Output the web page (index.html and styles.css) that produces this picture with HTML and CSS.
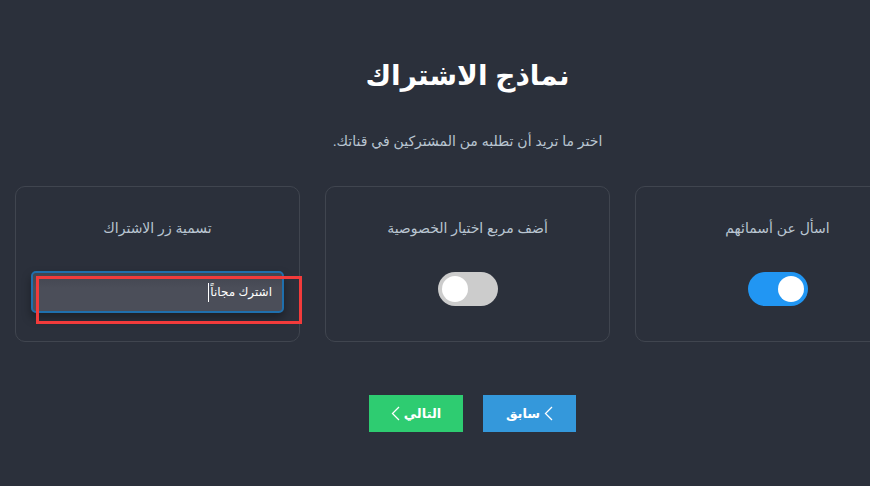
FILE: index.html
```html
<!DOCTYPE html>
<html lang="ar">
<head>
<meta charset="utf-8">
<link rel="stylesheet" href="styles.css">
</head>
<body>
<main class="page">
  <h1 class="title" dir="rtl">نماذج الاشتراك</h1>
  <p class="subtitle" dir="rtl">اختر ما تريد أن تطلبه من المشتركين في قناتك.</p>
  <div class="cards">
    <div class="card card-input">
      <div class="card-label" dir="rtl">تسمية زر الاشتراك</div>
      <div class="text-input" dir="rtl"><span class="input-text">اشترك مجاناً</span><span class="caret"></span></div>
      <div class="annotation"></div>
    </div>
    <div class="card">
      <div class="card-label" dir="rtl">أضف مربع اختيار الخصوصية</div>
      <div class="switch"><span class="knob"></span></div>
    </div>
    <div class="card">
      <div class="card-label" dir="rtl">اسأل عن أسمائهم</div>
      <div class="switch on"><span class="knob"></span></div>
    </div>
  </div>
  <div class="actions" dir="rtl">
    <button class="btn btn-prev"><svg class="chev" width="9" height="15" viewBox="0 0 9 15"><path d="M8 1 L1.5 7.5 L8 14" fill="none" stroke="#fff" stroke-width="1.3"/></svg><span>سابق</span></button>
    <button class="btn btn-next"><span>التالي</span><svg class="chev" width="9" height="15" viewBox="0 0 9 15"><path d="M8 1 L1.5 7.5 L8 14" fill="none" stroke="#fff" stroke-width="1.3"/></svg></button>
  </div>
</main>
</body>
</html>
```

FILE: styles.css
```css
html, body {
  margin: 0;
  padding: 0;
  background: #2b303b;
  overflow: hidden;
  width: 870px;
  height: 486px;
}
body {
  font-family: "Liberation Sans", "DejaVu Sans", sans-serif;
}
.page {
  width: 935px;
  display: flex;
  flex-direction: column;
  align-items: center;
}
.title {
  margin: 56px 0 0;
  font-size: 28px;
  line-height: 40px;
  font-weight: bold;
  color: #ffffff;
}
.subtitle {
  margin: 36px 0 0;
  font-size: 14px;
  line-height: 18px;
  color: #b9c5d1;
}
.cards {
  align-self: flex-start;
  display: flex;
  gap: 25px;
  margin: 36px 0 0 15px;
  flex-shrink: 0;
}
.card {
  position: relative;
  flex: 0 0 auto;
  width: 285px;
  height: 156px;
  box-sizing: border-box;
  border: 1px solid #40454f;
  border-radius: 10px;
  padding: 32px 15px 0;
  display: flex;
  flex-direction: column;
  align-items: center;
}
.card-label {
  font-size: 14px;
  line-height: 18px;
  color: #b9c5d1;
  margin-bottom: 35px;
}
.switch {
  position: relative;
  width: 60px;
  height: 34px;
  border-radius: 17px;
  background: #cccccc;
}
.switch .knob {
  position: absolute;
  top: 4px;
  left: 4px;
  width: 26px;
  height: 26px;
  border-radius: 50%;
  background: #ffffff;
}
.switch.on {
  background: #2196f3;
}
.switch.on .knob {
  left: 30px;
}
.text-input {
  align-self: stretch;
  height: 42px;
  box-sizing: border-box;
  margin-top: -1px;
  border: 2px solid #1f6fad;
  border-radius: 5px;
  background: linear-gradient(#42454f, #4b4e59 40%);
  box-shadow: 0 5px 10px rgba(0, 0, 0, 0.35);
  display: flex;
  align-items: center;
  padding: 0 10px;
}
.input-text {
  color: #ffffff;
  font-size: 12px;
  line-height: 16px;
}
.caret {
  display: inline-block;
  width: 1px;
  height: 19px;
  background: #ffffff;
  margin-right: 1px;
}
.annotation {
  position: absolute;
  left: 20px;
  top: 89px;
  width: 266px;
  height: 48px;
  box-sizing: border-box;
  border: 3px solid #f23b3b;
}
.actions {
  display: flex;
  gap: 20px;
  margin-top: 53px;
  margin-left: 10px;
}
.btn {
  height: 37px;
  width: 94px;
  border: none;
  border-radius: 0;
  color: #ffffff;
  font-family: "Liberation Sans", "DejaVu Sans", sans-serif;
  font-size: 13px;
  font-weight: bold;
  display: flex;
  align-items: center;
  justify-content: center;
  gap: 4px;
  padding: 0;
}
.btn-prev {
  background: #3498db;
  width: 93px;
}
.btn-next {
  background: #2ecc71;
}
.chev {
  display: block;
}
```
